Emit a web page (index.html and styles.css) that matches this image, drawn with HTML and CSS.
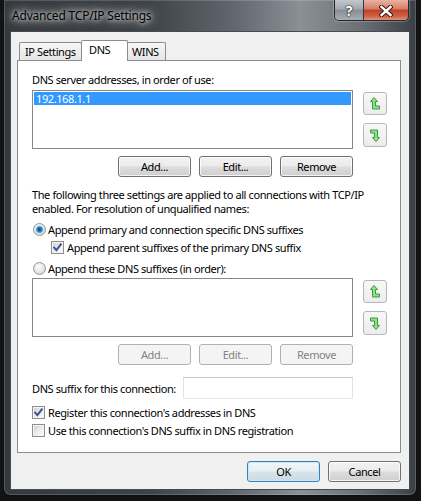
FILE: index.html
```html
<!DOCTYPE html>
<html lang="en">
<head>
  <meta charset="UTF-8">
  <title>Advanced TCP/IP Settings</title>
  <link rel="stylesheet" href="styles.css">
</head>
<body>
  <div class="window">
    <div class="titlebar">
      <div class="title">Advanced TCP/IP Settings</div>
      <div class="caps">
        <div class="cap help">?</div>
        <div class="cap close">
          <svg width="14" height="12" viewBox="0 0 14 12">
            <path d="M2.5 2 L11.5 10 M11.5 2 L2.5 10" stroke="#3a1a14" stroke-width="4.4" stroke-linecap="square"/>
            <path d="M2.5 2 L11.5 10 M11.5 2 L2.5 10" stroke="#fff" stroke-width="2.4" stroke-linecap="square"/>
          </svg>
        </div>
      </div>
    </div>

    <div class="client">
      <div class="tabs">
        <div class="tab tab-ip">IP Settings</div>
        <div class="tab tab-dns active">DNS</div>
        <div class="tab tab-wins">WINS</div>
      </div>

      <div class="panel">
        <div class="lbl first">DNS server addresses, in order of use:</div>
        <div class="list-row">
          <div class="listbox"><div class="item sel">192.168.1.1</div></div>
          <div class="updown">
            <div class="arrow-btn">
              <svg class="arrow" width="10" height="13" viewBox="0 0 10 13"><path d="M4 0.5 L7.5 4.5 L5.5 4.5 L5.5 9 L9.5 9 L9.5 12 L2.5 12 L2.5 4.5 L0.5 4.5 Z"/></svg>
            </div>
            <div class="arrow-btn down">
              <svg class="arrow flip" width="10" height="13" viewBox="0 0 10 13"><path d="M4 0.5 L7.5 4.5 L5.5 4.5 L5.5 9 L9.5 9 L9.5 12 L2.5 12 L2.5 4.5 L0.5 4.5 Z"/></svg>
            </div>
          </div>
        </div>
        <div class="btn-row">
          <button class="btn">Add...</button>
          <button class="btn">Edit...</button>
          <button class="btn">Remove</button>
        </div>

        <p class="note">The following three settings are applied to all connections with TCP/IP<br>enabled. For resolution of unqualified names:</p>

        <div class="opt opt-r1"><span class="radio on"></span>Append primary and connection specific DNS suffixes</div>
        <div class="opt opt-sub">
          <span class="chk"><svg width="11" height="11" viewBox="0 0 11 11"><path d="M2.2 5.6 L4.4 8.2 L8.8 2.4" /></svg></span>Append parent suffixes of the primary DNS suffix
        </div>
        <div class="opt opt-r2"><span class="radio"></span>Append these DNS suffixes (in order):</div>

        <div class="list-row list2">
          <div class="listbox"></div>
          <div class="updown">
            <div class="arrow-btn">
              <svg class="arrow" width="10" height="13" viewBox="0 0 10 13"><path d="M4 0.5 L7.5 4.5 L5.5 4.5 L5.5 9 L9.5 9 L9.5 12 L2.5 12 L2.5 4.5 L0.5 4.5 Z"/></svg>
            </div>
            <div class="arrow-btn down">
              <svg class="arrow flip" width="10" height="13" viewBox="0 0 10 13"><path d="M4 0.5 L7.5 4.5 L5.5 4.5 L5.5 9 L9.5 9 L9.5 12 L2.5 12 L2.5 4.5 L0.5 4.5 Z"/></svg>
            </div>
          </div>
        </div>
        <div class="btn-row btn-row2">
          <button class="btn" disabled>Add...</button>
          <button class="btn" disabled>Edit...</button>
          <button class="btn" disabled>Remove</button>
        </div>

        <div class="suffix-row">
          <span class="suffix-lbl">DNS suffix for this connection:</span>
          <span class="textbox"></span>
        </div>

        <div class="opt chk-row chk-row1">
          <span class="chk"><svg width="11" height="11" viewBox="0 0 11 11"><path d="M2.2 5.6 L4.4 8.2 L8.8 2.4" /></svg></span>Register this connection's addresses in DNS
        </div>
        <div class="opt chk-row chk-row2">
          <span class="chk"></span>Use this connection's DNS suffix in DNS registration
        </div>
      </div>

      <div class="dlg-btns">
        <button class="btn default">OK</button>
        <button class="btn">Cancel</button>
      </div>
    </div>
  </div>
</body>
</html>
```
FILE: styles.css
```css
html,body{margin:0;padding:0;}
body{
  width:421px;height:501px;overflow:hidden;
  background:#121315;
  font-family:"Noto Sans","DejaVu Sans",sans-serif;
  font-size:11px;line-height:13px;letter-spacing:-0.4px;
  color:#000;
}

/* window frame (aero glass) */
.window{
  margin-left:3px;
  width:414px;height:496px;
  box-sizing:border-box;
  padding:0 6px 5px;
  border:1px solid #0e0f11;border-top:none;
  border-radius:0 0 7px 7px;
  background:linear-gradient(90deg,#35393e 0%,#3e4348 35%,#5f656c 55%,#8a9096 72%,#6c7278 86%,#3b3f44 100%);
  box-shadow:inset 0 0 0 1px rgba(255,255,255,.16);
  display:flex;flex-direction:column;
}
.titlebar{
  height:31px;flex:none;
  display:flex;justify-content:space-between;align-items:flex-start;
}
.title{
  margin:8px 0 0 2px;
  font-size:12px;line-height:15px;letter-spacing:-0.2px;
  text-shadow:0 0 5px rgba(255,255,255,.95),0 0 10px rgba(255,255,255,.8),0 0 16px rgba(255,255,255,.55);
}
.caps{
  display:flex;
  margin-right:1px;
  height:21px;box-sizing:border-box;
  border:1px solid #24272b;border-top:none;
  border-radius:0 0 5px 5px;
  overflow:hidden;
  box-shadow:0 0 0 1px rgba(255,255,255,.22);
}
.cap{display:flex;align-items:center;justify-content:center;}
.help{
  width:28px;
  border-right:1px solid #34373b;
  background:linear-gradient(#c3c8cd,#a2a8ae 45%,#888e95 52%,#a8aeb4);
  color:#fff;font-weight:bold;font-size:14px;letter-spacing:0;
  text-shadow:0 0 1px #222,0 0 1px #222,0 0 2px #333;
  padding-top:1px;
}
.close{
  width:44px;
  background:linear-gradient(#eab2a4,#d9806a 42%,#c2412a 52%,#cf5f45 80%,#e2917a);
  padding-top:2px;
}

/* client area */
.client{
  flex:1;
  background:#f0f0f0;
  border:1px solid #474b50;
  padding:8px 8px 0 6px;
  display:flex;flex-direction:column;
}
.tabs{display:flex;align-items:flex-end;height:20px;margin-left:2px;}
.tab{
  box-sizing:border-box;
  height:18px;
  border:1px solid #898c95;border-bottom:none;
  border-radius:2px 2px 0 0;
  margin-right:-1px;
  padding:2px 0 0;
  background:linear-gradient(#f6f6f6,#e6e6e6);
}
.tab-ip{width:63px;padding-left:5px;}
.tab-dns{width:47px;padding-left:7px;}
.tab-wins{width:39px;padding-left:4px;}
.tab.active{
  height:21px;margin-bottom:-1px;
  background:#fff;
  position:relative;z-index:1;
}

.panel{
  box-sizing:border-box;
  width:384px;
  border:1px solid #898c95;
  background:#fff;
  padding:0 13px 15px 14px;
  display:flex;flex-direction:column;
}
.lbl.first{margin-top:12px;}
.list-row{display:flex;gap:10px;margin-top:4px;}
.list2{margin-top:3px;}
.listbox{
  box-sizing:border-box;
  width:321px;height:59px;
  border:1px solid #828790;
  background:#fff;
}
.item{height:13px;margin:1px;padding-left:2px;}
.item.sel{background:#3399ff;color:#fff;}
.updown{display:flex;flex-direction:column;justify-content:space-between;padding:2px 0;}
.arrow-btn{
  box-sizing:border-box;
  width:24px;height:23px;
  border:1px solid #b5b8bb;border-radius:3px;
  background:linear-gradient(#f8f8f8,#ececec);
  display:flex;align-items:center;justify-content:center;
}
.arrow-btn.down{height:24px;}
.arrow path{fill:#8de08d;stroke:#3a9a3a;stroke-width:1;}
.arrow.flip{transform:rotate(180deg);}

.btn-row{display:flex;justify-content:flex-end;gap:8px;width:321px;margin-top:7px;}
.btn{
  box-sizing:border-box;
  width:73px;height:21px;
  padding:0;margin:0;
  border:1px solid #707070;border-radius:3px;
  background:linear-gradient(#f2f2f2,#ebebeb 48%,#dddddd 52%,#cfcfcf);
  box-shadow:inset 0 0 0 1px rgba(255,255,255,.75);
  font:inherit;letter-spacing:inherit;color:#000;
  display:flex;align-items:center;justify-content:center;
}
.btn:disabled{
  border-color:#adb2b5;
  background:#f4f4f4;
  box-shadow:none;
  color:#838383;
}
.btn.default{
  border-color:#3c7fb1;
  box-shadow:inset 0 0 0 1px #c7e8fa;
  background:linear-gradient(#f1f6f9,#e7eff4 48%,#d7e3ea 52%,#cbdbe4);
}
.btn-row2{margin-top:7px;}

.note{margin:11px 0 0;line-height:14px;white-space:nowrap;}

.opt{display:flex;align-items:center;height:13px;gap:2px;white-space:nowrap;}
.opt-r1{margin-top:7px;}
.opt-sub{margin-top:5px;margin-left:19px;gap:3px;}
.opt-r2{margin-top:8px;}
.radio{
  box-sizing:border-box;
  width:13px;height:13px;margin-left:1px;
  border:1px solid #959595;border-radius:50%;
  background:radial-gradient(circle at 40% 35%,#ffffff,#e4e4e4 55%,#cfcfcf);
}
.radio.on{
  background:
    radial-gradient(circle,#0d4a82 0,#1c68ab 1.6px,#4b9ad8 2.8px,#8cc7f0 3.6px,rgba(140,199,240,0) 4.2px),
    radial-gradient(circle at 40% 35%,#ffffff,#e4e4e4 55%,#cfcfcf);
}
.chk{
  box-sizing:border-box;
  width:13px;height:13px;flex:none;
  border:1px solid #8e8f8f;
  background:linear-gradient(135deg,#c9cdd2,#eeeeef 55%,#ffffff);
  box-shadow:inset 0 0 0 1px #f4f4f4;
  display:flex;
}
.chk path{fill:none;stroke:#3b5593;stroke-width:2;stroke-linecap:square;}

.suffix-row{display:flex;align-items:center;height:22px;margin-top:12px;}
.suffix-lbl{width:151px;white-space:nowrap;}
.textbox{
  box-sizing:border-box;
  width:170px;height:22px;
  border:1px solid;border-color:#c4c7cc #dfe3e8 #e3e9ef #dfe3e8;
  background:#fff;
}
.chk-row{gap:3px;}
.chk-row1{margin-top:7px;}
.chk-row2{margin-top:5px;}

.dlg-btns{display:flex;justify-content:flex-end;gap:8px;width:384px;margin-top:8px;}
```
